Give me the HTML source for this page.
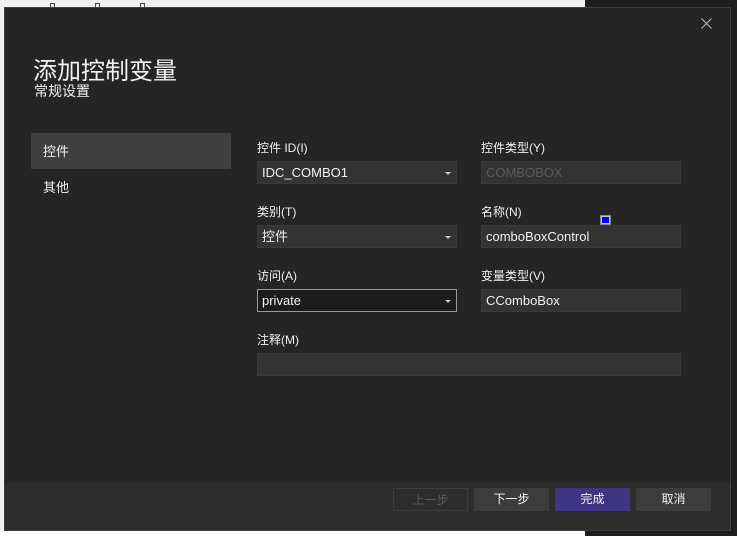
<!DOCTYPE html>
<html><head><meta charset="utf-8"><style>
*{margin:0;padding:0;box-sizing:border-box}
body{width:737px;height:536px;position:relative;overflow:hidden;background:#f0f0f0;font-family:"Liberation Sans","Noto Sans CJK SC",sans-serif;color:#f1f1f1}
.a{position:absolute}
.dlg{left:4px;top:7px;width:727px;height:524px;background:#252525;border:1px solid #3f3f3f}
.foot{left:5px;top:483px;width:725px;height:47px;background:#2d2d2d}
.lbl{font-size:12px;color:#f1f1f1}
.in{height:23px;background:#333;border:1px solid #3a3a3a;font-size:13px;line-height:21px;padding-left:4px;color:#f1f1f1}
.dd::after{content:"";position:absolute;right:5px;top:10px;border-left:3px solid transparent;border-right:3px solid transparent;border-top:3px solid #ccc}
.btn{top:488px;width:75px;height:23px;font-size:12px;line-height:23px;text-align:center;background:#3c3c3c}
</style></head><body>
<div class="a" style="left:585px;top:0;width:152px;height:536px;background:#1e1e1e"></div>
<div class="a" style="left:0;top:531px;width:585px;height:5px;background:#fff"></div>
<div class="a" style="left:50px;top:3px;width:5px;height:5px;border:1px solid #444"></div>
<div class="a" style="left:95px;top:3px;width:5px;height:5px;border:1px solid #444"></div>
<div class="a" style="left:140px;top:3px;width:5px;height:5px;border:1px solid #444"></div>
<div class="a dlg"></div>
<div class="a foot"></div>
<svg class="a" style="left:701px;top:18px" width="11" height="11"><path d="M0.5 0.5L10.5 10.5M10.5 0.5L0.5 10.5" stroke="#bbb" stroke-width="1"/></svg>
<div class="a" style="left:33px;top:51px;font-size:24px;">添加控制变量</div>
<div class="a" style="left:34px;top:81px;font-size:14px;">常规设置</div>
<div class="a" style="left:31px;top:133px;width:200px;height:36px;background:#3f3f3f"></div>
<div class="a lbl" style="left:43px;top:141px;font-size:13px">控件</div>
<div class="a lbl" style="left:43px;top:177px;font-size:13px">其他</div>

<div class="a lbl" style="left:257px;top:139px">控件 ID(I)</div>
<div class="a in dd" style="left:257px;top:161px;width:200px">IDC_COMBO1</div>
<div class="a lbl" style="left:481px;top:139px">控件类型(Y)</div>
<div class="a in" style="left:481px;top:161px;width:200px;color:#5a5a5a">COMBOBOX</div>

<div class="a lbl" style="left:257px;top:203px">类别(T)</div>
<div class="a in dd" style="left:257px;top:225px;width:200px">控件</div>
<div class="a lbl" style="left:481px;top:203px">名称(N)</div>
<div class="a in" style="left:481px;top:225px;width:200px">comboBoxControl</div>
<div class="a" style="left:600px;top:215px;width:11px;height:10px;background:#ccc;border:1px solid #888"><div style="margin:1px;width:7px;height:6px;background:#00f"></div></div>

<div class="a lbl" style="left:257px;top:267px">访问(A)</div>
<div class="a in dd" style="left:257px;top:289px;width:200px;background:#1c1c1c;border-color:#999">private</div>
<div class="a lbl" style="left:481px;top:267px">变量类型(V)</div>
<div class="a in" style="left:481px;top:289px;width:200px">CComboBox</div>

<div class="a lbl" style="left:257px;top:331px">注释(M)</div>
<div class="a in" style="left:257px;top:353px;width:424px"></div>

<div class="a btn" style="left:393px;background:none;border:1px solid #3c3c3c;color:#5a5a5a">上一步</div>
<div class="a btn" style="left:474px">下一步</div>
<div class="a btn" style="left:555px;background:#3f3582">完成</div>
<div class="a btn" style="left:636px">取消</div>
</body></html>
